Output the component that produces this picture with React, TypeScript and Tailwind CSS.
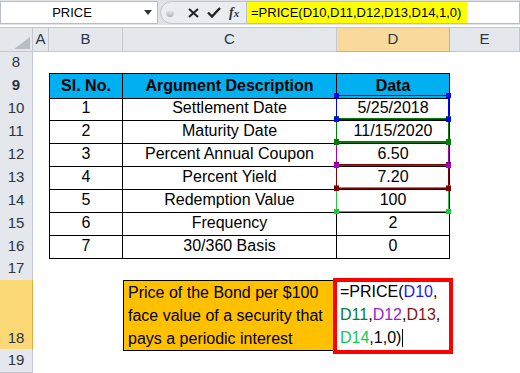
import React from "react";

const GRID = "grid grid-cols-[33px_16px_74px_214px_113px_1fr]";
const FONT = "font-['Liberation_Sans',Arial,sans-serif]";

const data = [
  ["1", "Settlement Date", "5/25/2018"],
  ["2", "Maturity Date", "11/15/2020"],
  ["3", "Percent Annual Coupon", "6.50"],
  ["4", "Percent Yield", "7.20"],
  ["5", "Redemption Value", "100"],
  ["6", "Frequency", "2"],
  ["7", "30/360 Basis", "0"],
];

// range colours for the cells referenced by the formula
const refs = [
  { line: "border-[#0000ff]", dot: "bg-[#0000ff]", z: "z-[5]" },
  { line: "border-[#008000]", dot: "bg-[#008000]", z: "z-[4]" },
  { line: "border-[#a000c8]", dot: "bg-[#a000c8]", z: "z-[3]" },
  { line: "border-[#800000]", dot: "bg-[#800000]", z: "z-[2]" },
  { line: "border-[#1ec83c]", dot: "bg-[#1ec83c]", z: "z-[1]" },
];

function RowHead({ n, active, bottom }: { n?: string; active?: boolean; bottom?: boolean }) {
  return (
    <div
      className={`flex justify-center border-b border-r text-[15px] text-[#2c3644] ${
        bottom ? "items-end pb-[1px]" : "items-center"
      } ${active ? "bg-[#fcd977] border-[#e8a63e]" : "bg-[#e4e7eb] border-[#c3c8ce]"}`}
    >
      {n}
    </div>
  );
}

function ColHead({ l, active }: { l: string; active?: boolean }) {
  return (
    <div
      className={`flex items-center justify-center border-r border-b text-[15px] text-[#2c3644] ${
        active ? "bg-[#f9d99c] border-[#eeaa48]" : "bg-[#e4e7eb] border-[#c3c8ce]"
      }`}
    >
      {l}
    </div>
  );
}

function RefBox({ i }: { i: number }) {
  const r = refs[i];
  return (
    <div className={`absolute -top-px -left-px right-0 bottom-0 border ${r.line} ${r.z}`}>
      <span className={`absolute -top-[3px] -left-[3px] w-[5px] h-[5px] ${r.dot}`} />
      <span className={`absolute -top-[3px] -right-[3px] w-[5px] h-[5px] ${r.dot}`} />
      <span className={`absolute -bottom-[3px] -left-[3px] w-[5px] h-[5px] ${r.dot}`} />
      <span className={`absolute -bottom-[3px] -right-[3px] w-[5px] h-[5px] ${r.dot}`} />
    </div>
  );
}

function FormulaBar() {
  return (
    <>
      <div className="flex h-[25px] items-start bg-[#dfe3e8] pt-px">
        <div className="flex h-[23px] w-[158px] items-center border border-[#b6bdc6] bg-white">
          <span className="w-[142px] text-center text-[13px] text-black">PRICE</span>
          <svg width="8" height="5" viewBox="0 0 8 5" className="ml-[1px]">
            <path d="M0 0H8L4 5Z" fill="#333" />
          </svg>
        </div>
        <div className="ml-[2px] flex h-[23px] w-[87px] items-center rounded-l-full border border-[#bcc3cb] bg-[#e9ecf0]">
          <span className="ml-[5px] h-[8px] w-[8px] rounded-full bg-gradient-to-b from-[#f4f5f7] to-[#aeb4bb]" />
          <svg width="11" height="10" viewBox="0 0 11 10" className="ml-[14px]">
            <path d="M1 1L10 9M10 1L1 9" stroke="#222" strokeWidth="2" />
          </svg>
          <svg width="14" height="11" viewBox="0 0 14 11" className="ml-[8px]">
            <path d="M1 5.5L5 9.5L13 1" stroke="#222" strokeWidth="2.4" fill="none" />
          </svg>
          <span className="ml-[8px] font-['Liberation_Serif',serif] italic text-[14px] font-bold text-[#333]">
            f<span className="text-[11px]">x</span>
          </span>
        </div>
        <div className="flex h-[23px] flex-1 border border-[#b6bdc6] border-l-0 bg-white">
          <div className="flex h-full w-[220px] items-center bg-[#ffff00] pl-[4px] text-[13px] text-black">
            =PRICE(D10,D11,D12,D13,D14,1,0)
          </div>
        </div>
      </div>
      <div className="h-[3px] border-b border-[#c3c8ce] bg-white" />
    </>
  );
}

export default function App() {
  return (
    <div className={`h-[373px] w-[520px] overflow-hidden bg-white ${FONT}`}>
      <FormulaBar />

      <div className={`${GRID} h-[23px]`}>
        <div className="relative border-b border-r border-[#c3c8ce] bg-[#e4e7eb]">
          <svg width="16" height="12" viewBox="0 0 16 12" className="absolute bottom-[2px] right-[2px]">
            <path d="M16 0V12H0Z" fill="#b7bdc5" />
          </svg>
        </div>
        <ColHead l="A" />
        <ColHead l="B" />
        <ColHead l="C" />
        <ColHead l="D" active />
        <ColHead l="E" />
      </div>

      <div className={`${GRID} h-[22px]`}>
        <RowHead n="8" />
      </div>

      <div className={`${GRID} h-[23px] text-[16px] font-bold text-black`}>
        <RowHead n="9" />
        <div />
        <div className="flex items-center justify-center border border-black bg-[#00b0f0]">Sl. No.</div>
        <div className="flex items-center justify-center border-y border-r border-black bg-[#00b0f0]">
          Argument Description
        </div>
        <div className="flex items-center justify-center border-y border-r border-black bg-[#00b0f0]">Data</div>
      </div>

      {data.map((row, i) => (
        <div key={row[0]} className={`${GRID} h-[23px] text-[16px] text-black`}>
          <RowHead n={String(10 + i)} />
          <div />
          <div className="flex items-center justify-center border-x border-b border-black">{row[0]}</div>
          <div className="flex items-center justify-center border-r border-b border-black">{row[1]}</div>
          <div className="relative flex items-center justify-center border-r border-b border-black">
            {row[2]}
            {i < 5 && <RefBox i={i} />}
          </div>
        </div>
      ))}

      <div className={`${GRID} h-[23px]`}>
        <RowHead n="17" />
      </div>

      <div className={`${GRID} h-[69px] text-[16px] leading-[23px] text-black`}>
        <RowHead n="18" active bottom />
        <div />
        <div />
        <div className="border border-black bg-[#ffc000] pl-[4px]">
          <div>Price of the Bond per $100</div>
          <div>face value of a security that</div>
          <div>pays a periodic interest</div>
        </div>
        <div className="relative pl-[3px]">
          <div>
            =PRICE(<span className="text-[#1a1aff]">D10</span>,
          </div>
          <div>
            <span className="text-[#00803a]">D11</span>,<span className="text-[#a020d0]">D12</span>,
            <span className="text-[#8b1010]">D13</span>,
          </div>
          <div className="flex items-center">
            <span className="text-[#14c850]">D14</span>,1,0)
            <span className="ml-px inline-block h-[18px] w-px bg-black" />
          </div>
          <div className="absolute -top-[2px] -left-[4px] -right-[3px] -bottom-[3px] border-4 border-[#ff0000]" />
        </div>
      </div>

      <div className={`${GRID} h-[24px]`}>
        <RowHead n="19" />
      </div>
    </div>
  );
}
